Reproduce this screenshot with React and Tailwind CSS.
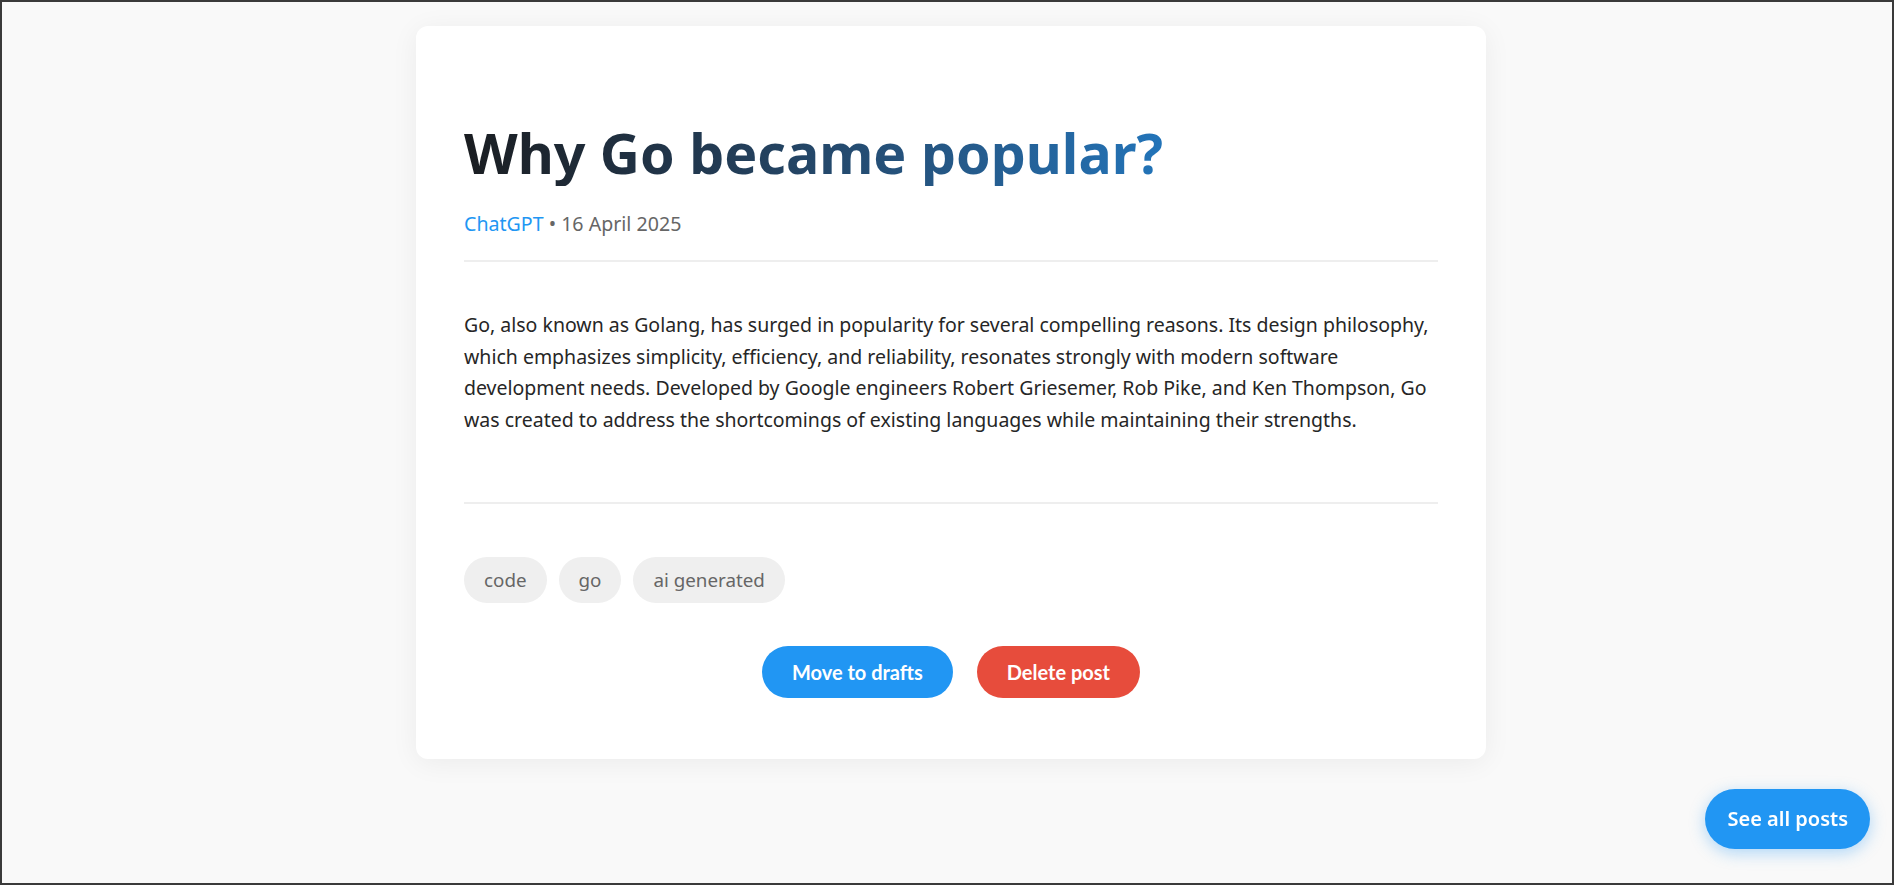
export default function App() {
  const tags = ['code', 'go', 'ai generated']

  return (
    <div className="min-h-screen h-screen border-2 border-[#3a3a3a] bg-[#f9f9f9] pt-6 pl-2 font-['Noto_Sans',sans-serif] overflow-hidden">
      <article className="mx-auto w-[1070px] bg-white rounded-xl shadow-[0_4px_28px_rgba(0,0,0,0.06)] px-12 pt-[94px] pb-[61px]">
        <h1 className="inline-block text-[55.5px] leading-[66px] font-bold bg-gradient-to-r from-[#1a1d21] to-[#2274b9] bg-clip-text text-transparent">
          Why Go became popular?
        </h1>

        <div className="mt-[23px] pb-[21px] border-b-2 border-[#eeeeee] text-[19.6px] leading-[30px] text-[#666]">
          <span className="text-[#2196f3]">ChatGPT</span> • 16 April 2025
        </div>

        <p className="mt-[47px] text-[19.5px] leading-[31.7px] text-[#262626]">
          Go, also known as Golang, has surged in popularity for several compelling reasons. Its design philosophy, which emphasizes simplicity, efficiency, and reliability, resonates strongly with modern software development needs. Developed by Google engineers Robert Griesemer, Rob Pike, and Ken Thompson, Go was created to address the shortcomings of existing languages while maintaining their strengths.
        </p>

        <div className="mt-[66px] border-b-2 border-[#eeeeee]" />

        <div className="mt-[53px] flex gap-3">
          {tags.map((t) => (
            <span key={t} className="rounded-full bg-[#efefef] px-5 py-[10px] text-[18.8px] leading-[26px] text-[#666]">
              {t}
            </span>
          ))}
        </div>

        <div className="mt-[43px] flex justify-center gap-6 font-['Lato',sans-serif]">
          <button className="rounded-full bg-[#2196f3] px-[30px] py-3 text-[20px] leading-[28px] font-bold text-white">
            Move to drafts
          </button>
          <button className="rounded-full bg-[#e74c3c] px-[30px] py-3 text-[20px] leading-[28px] font-bold text-white">
            Delete post
          </button>
        </div>
      </article>

      <button className="fixed right-6 bottom-9 rounded-full bg-[#2196f3] px-[22px] py-4 text-[20px] leading-[28px] font-semibold text-white shadow-[0_4px_16px_rgba(33,150,243,0.35)]">
        See all posts
      </button>
    </div>
  )
}
